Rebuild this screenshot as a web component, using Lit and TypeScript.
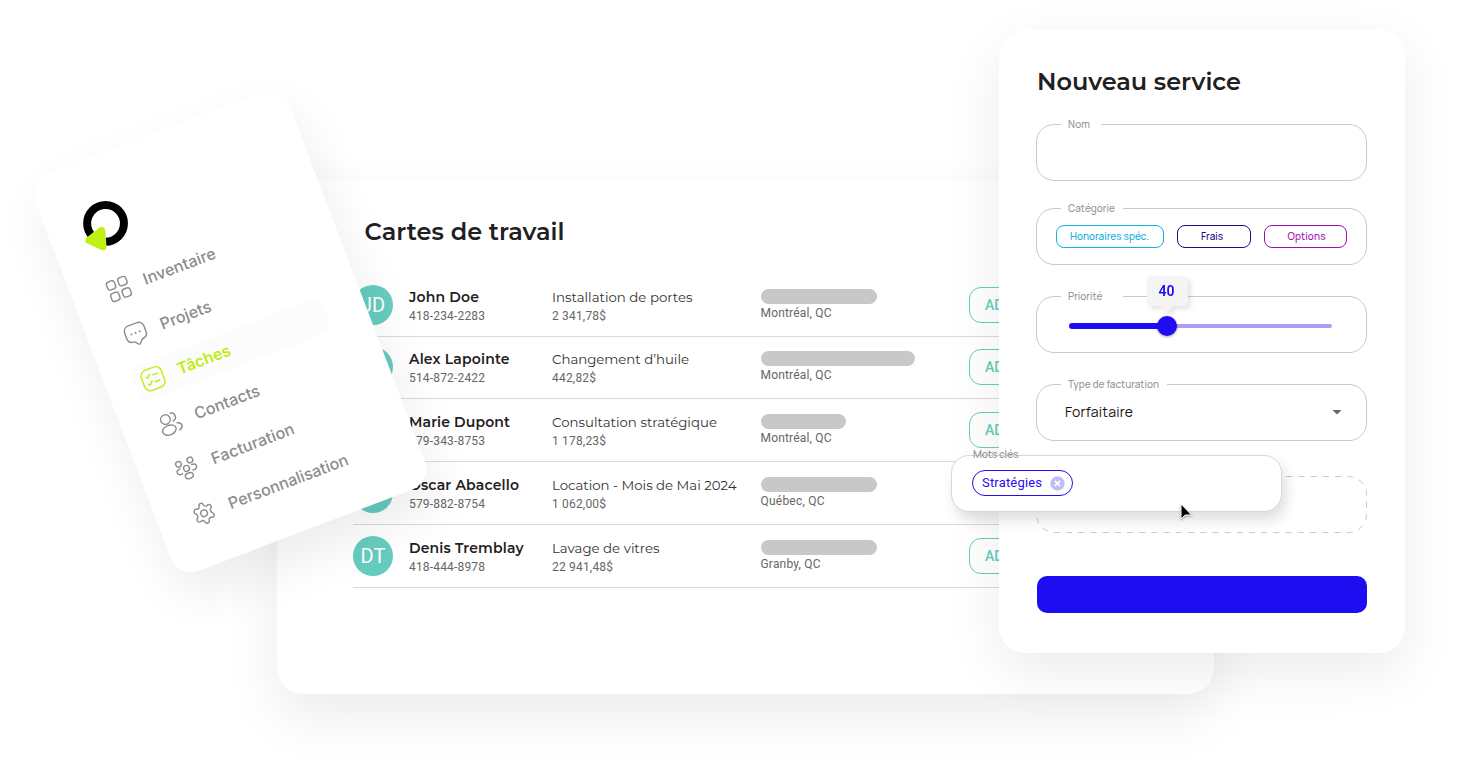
import { LitElement, html, css, svg } from "lit";
import { customElement, property } from "lit/decorators.js";
import { styleMap } from "lit/directives/style-map.js";

/** Single line of text whose tracking is adjusted so that it spans `width` pixels. */
@customElement("tracked-text")
class TrackedText extends LitElement {
  @property({ type: Number }) width = 0;
  @property() text = "";
  static styles = css`
    :host { display: block; white-space: nowrap; }
    .t { display: inline-block; }
  `;
  render() {
    return html`<span class="t">${this.text}</span>`;
  }
  updated() {
    const el = this.renderRoot.querySelector(".t") as HTMLElement;
    el.style.letterSpacing = "0";
    const natural = parseFloat(getComputedStyle(el).width);
    if (this.width && natural) {
      el.style.letterSpacing = (this.width - natural) / (this.text.length - 1) + "px";
    }
  }
}

const tt = (text: string, width: number) =>
  html`<tracked-text .text=${text} .width=${width}></tracked-text>`;

const icons = {
  grid: svg`<rect x="2" y="2" width="8.6" height="8.6" rx="2.8"/><rect x="14.4" y="2" width="8.6" height="8.6" rx="2.8"/><rect x="2" y="14.4" width="8.6" height="8.6" rx="2.8"/><rect x="14.4" y="14.4" width="8.6" height="8.6" rx="2.8"/>`,
  chat: svg`<path d="M8 2.2h9c3.600 0 6 2.400 6 6v5.600c0 3.400-2.200 5.500-5.300 5.800-1 .1-1.400.4-2 1.100l-1.900 2.300c-.8.9-1.800.9-2.600 0l-1.900-2.300c-.6-.7-1-1-2-1.100C4.200 19.300 2 17.200 2 13.800V8.200c0-3.600 2.400-6 6-6z"/><path d="M8 11.500h.01M12.500 11.500h.01M17 11.500h.01" stroke-width="2"/>`,
  tasks: svg`<rect x="1.600" y="1.600" width="21.800" height="21.800" rx="6.200"/><path d="M13.500 8.700h5M13.500 16.200h5M6.300 8.800l1.500 1.400 3-3.300M6.300 16.300l1.500 1.400 3-3.300"/>`,
  users: svg`<circle cx="9.500" cy="7" r="4.900"/><ellipse cx="9.500" cy="18.500" rx="7.200" ry="4.900"/><path d="M16.300 2.600c2.300.3 3.900 2.100 3.900 4.300s-1.600 4-3.900 4.300M19.500 14.300c2.300.5 3.800 1.900 3.800 3.900s-1.500 3.300-3.800 3.900"/>`,
  group: svg`<circle cx="5.800" cy="5.500" r="2.900"/><circle cx="18.200" cy="5.500" r="2.900"/><circle cx="12" cy="12.300" r="3"/><ellipse cx="12" cy="20.200" rx="4.200" ry="2.900"/><path d="M6.400 16.200C3.500 16.500 1.500 15.300 1.500 13.300c0-1.900 1.700-2.900 4.200-2.900M17.600 16.200c2.900.3 4.900-.9 4.900-2.900 0-1.900-1.700-2.900-4.200-2.900"/>`,
  gear: svg`<circle cx="12.500" cy="12.500" r="3.400"/><path d="M10.100 4.200c.2-1.500.9-2.400 2.400-2.400s2.200.9 2.400 2.400c.3 1.700 1.600 2.500 3.200 1.800 1.400-.6 2.500-.4 3.300.9.700 1.300.4 2.300-.8 3.300-1.400 1.100-1.400 3.500 0 4.600 1.200 1 1.500 2 .8 3.300-.8 1.300-1.900 1.500-3.300.9-1.600-.7-2.900.1-3.200 1.800-.2 1.500-.9 2.400-2.400 2.400s-2.200-.9-2.400-2.400c-.3-1.700-1.600-2.500-3.200-1.800-1.400.6-2.500.4-3.300-.9-.7-1.300-.4-2.300.8-3.300 1.400-1.100 1.400-3.500 0-4.600-1.200-1-1.500-2-.8-3.300.8-1.300 1.900-1.500 3.300-.9 1.600.7 2.900-.1 3.200-1.800z"/>`,
};

const menu = [
  { icon: icons.grid, label: "Inventaire", w: 76.5 },
  { icon: icons.chat, label: "Projets", w: 53.5 },
  { icon: icons.tasks, label: "Tâches", w: 56, active: true },
  { icon: icons.users, label: "Contacts", w: 69 },
  { icon: icons.group, label: "Facturation", w: 87.5 },
  { icon: icons.gear, label: "Personnalisation", w: 127 },
];

@customElement("side-menu")
class SideMenu extends LitElement {
  static styles = css`
    :host { display: block; box-sizing: border-box; width: 272px; height: 425px; border-radius: 22px; background: #fff; padding: 40px 40px 0 29px; font: 450 16px/20px Inter, sans-serif; color: #8c8c8c; box-shadow: 0 24px 50px rgba(0, 0, 0, 0.075); }
    .logo { display: block; width: 60px; height: 60px; margin-left: -2px; transform: rotate(20.8deg); overflow: visible; }
    .items { display: flex; flex-direction: column; gap: 12px; padding-top: 15.700px; }
    .item { display: flex; align-items: center; height: 36px; border-radius: 10px; padding-left: 6.200px; gap: 13.900px; }
    .item svg { width: 24.500px; height: 24.500px; fill: none; stroke: currentColor; stroke-width: 1.450; stroke-linecap: round; stroke-linejoin: round; }
    .item tracked-text { padding-bottom: 1px; }
    .active { background: #fcfcfc; color: #bdee12; font-weight: 600; }
  `;
  render() {
    return html`
      <svg class="logo" viewBox="0 0 60 60">
        <circle cx="30" cy="27" r="18.400" fill="none" stroke="#000" stroke-width="8" />
        <path d="M26.200 34 L27.500 50.500 L13.300 44Z" fill="#c1f015" stroke="#c1f015" stroke-width="7" stroke-linejoin="round" />
      </svg>
      <div class="items">
        ${menu.map(m => html`<div class="item ${m.active ? "active" : ""}">
          <svg viewBox="0 0 25 25">${m.icon}</svg>${tt(m.label, m.w)}
        </div>`)}
      </div>`;
  }
}

const rows = [
  { i: "JD", n: "John Doe", nw: 70, p: "418-234-2283", d: "Installation de portes", dw: 140.5, a: "2 341,78$", aw: 54, b: 116, c: "Montréal, QC", cw: 71, open: true },
  { i: "AL", n: "Alex Lapointe", nw: 100.5, p: "514-872-2422", d: "Changement d’huile", dw: 137, a: "442,82$", aw: 44, b: 154, c: "Montréal, QC", cw: 71, open: true },
  { i: "MD", n: "Marie Dupont", nw: 101, p: "579-343-8753", d: "Consultation stratégique", dw: 165, a: "1 178,23$", aw: 54, b: 85, c: "Montréal, QC", cw: 71, open: true },
  { i: "OA", n: "Oscar Abacello", nw: 110, p: "579-882-8754", d: "Location - Mois de Mai 2024", dw: 184.5, a: "1 062,00$", aw: 54, b: 116, c: "Québec, QC", cw: 64, open: false },
  { i: "DT", n: "Denis Tremblay", nw: 114.5, p: "418-444-8978", d: "Lavage de vitres", dw: 107.5, a: "22 941,48$", aw: 61, b: 116, c: "Granby, QC", cw: 60, open: true },
];

@customElement("work-cards")
class WorkCards extends LitElement {
  static styles = css`
    :host { display: block; box-sizing: border-box; width: 937px; height: 513px; border-radius: 26px; background: #fff; padding: 35px 76px 0; box-shadow: 0 22px 55px rgba(0, 0, 0, 0.08); font-family: Roboto, sans-serif; color: #1f2022; }
    h1 { margin: 0 0 26px 11.500px; font: 600 24px/32px Montserrat, Inter, sans-serif; }
    .row { display: grid; grid-template-columns: 56px 143px 208.500px 208.500px auto; box-sizing: border-box; height: 63px; padding-top: 11px; border-bottom: 1px solid #dadada; }
    .row.tight { height: 62px; padding-top: 10px; }
    .avatar { width: 40px; height: 40px; border-radius: 50%; background: #67ccc0; color: #fff; font-size: 20px; line-height: 40px; text-align: center; }
    .name, .desc { padding-top: 3px; line-height: 18px; font-family: Montserrat, Inter, sans-serif; font-size: 14px; font-weight: 600; }
    .desc { font-weight: 400; font-size: 13.300px; color: #333; }
    .sub { font-size: 12px; line-height: 18px; color: #666; padding-top: 1px; }
    .bar { height: 15px; border-radius: 8px; background: #c8c8c8; margin-top: 4px; }
    .bar + .sub { padding-top: 0; }
    .action { box-sizing: border-box; width: 120px; height: 36px; margin-top: 2px; border: 1px solid #67ccc0; border-radius: 12px; padding-left: 15px; font-weight: 500; font-size: 14px; line-height: 35px; color: #67ccc0; }
  `;
  render() {
    return html`
      <h1>${tt("Cartes de travail", 200)}</h1>
      ${rows.map((r, k) => html`<div class="row ${k === 1 ? "tight" : ""}">
        <div class="avatar">${r.i}</div>
        <div><div class="name">${tt(r.n, r.nw)}</div><div class="sub">${tt(r.p, 76)}</div></div>
        <div><div class="desc">${tt(r.d, r.dw)}</div><div class="sub">${tt(r.a, r.aw)}</div></div>
        <div><div class="bar" style=${styleMap({ width: r.b + "px" })}></div><div class="sub">${tt(r.c, r.cw)}</div></div>
        ${r.open ? html`<div class="action">AD</div>` : ""}
      </div>`)}`;
  }
}

@customElement("service-form")
class ServiceForm extends LitElement {
  static styles = css`
    :host { display: block; box-sizing: border-box; width: 406px; height: 623px; border-radius: 26px; background: #fff; padding: 36px 37px 0; box-shadow: 0 18px 55px rgba(0, 0, 0, 0.08); font-family: Manrope, Inter, sans-serif; color: #1f2022; }
    h1 { margin: 0 0 20px 1px; font: 600 24px/32px Montserrat, Inter, sans-serif; height: 32px; }
    fieldset { box-sizing: border-box; width: 331px; height: 63px; margin: 0 0 25px; padding: 0; min-width: 0; border: 1px solid #c9c9c9; border-radius: 18px; }
    fieldset.first { margin-bottom: 21px; }
    legend { margin-left: 24px; padding: 0 7px; height: 12px; font-size: 10px; font-weight: 500; line-height: 13px; color: #959595; box-sizing: border-box; }
    .chips { display: flex; gap: 13px; padding: 11px 0 0 19px; font-size: 10px; font-weight: 500; }
    .chip { display: flex; justify-content: center; align-items: center; box-sizing: border-box; height: 23px; border: 1px solid; border-radius: 8px; padding-bottom: 1px; }
    .cyan { width: 108px; color: #0fb1dd; padding-right: 1px; }
    .navy { width: 74px; color: #1d0a85; padding-right: 4px; }
    .purple { width: 83px; color: #a20db0; padding-left: 2px; }
    .slider { position: relative; display: flex; align-items: center; margin: 14px 0 0 32px; height: 20px; width: 263px; }
    .done { width: 98px; height: 6px; border-radius: 3px; background: #1f0df2; }
    .rest { flex: 1; height: 4px; border-radius: 2px; background: #a79ef8; }
    .knob { position: absolute; left: 88px; top: 0; width: 20px; height: 20px; border-radius: 50%; background: #1f0df2; box-shadow: 0 1px 3px rgba(0, 0, 0, 0.35); }
    .tip { position: absolute; left: 78px; top: -40px; width: 41px; height: 36px; filter: drop-shadow(3px 3px 2px rgba(0, 0, 0, 0.1)); }
    .bubble { display: flex; justify-content: center; box-sizing: border-box; height: 30px; padding-right: 2px; border-radius: 4px; background: #f4f4f4; color: #1f0df2; font: 600 14px/30px Roboto, sans-serif; }
    .tail { width: 12px; height: 6px; margin-left: 14px; background: #f4f4f4; clip-path: polygon(0 0, 100% 0, 50% 100%); }
    .select { display: flex; justify-content: space-between; align-items: center; padding: 11px 24px 0 28px; height: 20px; font-size: 14px; font-weight: 450; color: #151515; }
    .caret { width: 10px; height: 5px; margin-top: 2px; background: #666; clip-path: polygon(0 0, 100% 0, 50% 100%); }
    .drop { display: block; margin-top: 35px; }
    .submit { display: block; border: 0; margin: 43px 0 0 1px; width: 330px; height: 37px; border-radius: 10px; background: #1f0df2; }
  `;
  field(label: string, w: number, gap: number, body: unknown, cls = "") {
    return html`<fieldset class=${cls}><legend style=${styleMap({ width: gap + "px" })}>${tt(label, w)}</legend>${body}</fieldset>`;
  }
  render() {
    return html`
      <h1>${tt("Nouveau service", 204)}</h1>
      ${this.field("Nom", 22, 40, "", "first")}
      ${this.field("Catégorie", 47, 62, html`<div class="chips">
        <div class="chip cyan">${tt("Honoraires spéc.", 79)}</div>
        <div class="chip navy">${tt("Frais", 22)}</div>
        <div class="chip purple">${tt("Options", 38)}</div>
      </div>`)}
      ${this.field("Priorité", 34.5, 62, html`<div class="slider">
        <div class="done"></div><div class="rest"></div><div class="knob"></div>
        <div class="tip"><div class="bubble">${tt("40", 16)}</div><div class="tail"></div></div>
      </div>`)}
      ${this.field("Type de facturation", 91, 106, html`<div class="select">
        ${tt("Forfaitaire", 68)}<div class="caret"></div>
      </div>`)}
      <svg class="drop" width="331" height="57" fill="none" stroke="#c9c9c9"><rect x=".5" y=".5" width="330" height="56" rx="18" stroke-dasharray="6.100 6.100" /></svg>
      <button class="submit"></button>`;
  }
}

@customElement("keyword-box")
class KeywordBox extends LitElement {
  static styles = css`
    :host { display: block; box-sizing: border-box; width: 331px; height: 57px; border: 1px solid #d8d8d8; border-radius: 18px; background: #fff; box-shadow: 4px 8px 14px rgba(0, 0, 0, 0.13); padding-left: 20px; }
    .label { margin: -8px 0 9px 1px; font: 500 10.500px/13px Manrope, Inter, sans-serif; color: #909090; }
    .tag { display: flex; align-items: center; box-sizing: border-box; width: 101px; height: 26px; border: 1px solid #1f0df2; border-radius: 13px; padding-left: 9px; gap: 8px; font: 400 13px/20px Roboto, sans-serif; color: #1f0df2; }
    .tag svg { width: 15px; height: 15px; }
  `;
  render() {
    return html`
      <div class="label">${tt("Mots clés", 45.5)}</div>
      <div class="tag">${tt("Stratégies", 60)}
        <svg viewBox="0 0 15 15"><circle cx="7.500" cy="7.500" r="7.200" fill="#c2bbfb" /><path d="M4.800 4.800l5.400 5.400M10.200 4.800l-5.400 5.400" stroke="#fff" stroke-width="1.700" /></svg>
      </div>`;
  }
}

@customElement("app-root")
class AppRoot extends LitElement {
  static styles = css`
    :host { display: block; position: relative; width: 1459px; height: 772px; overflow: hidden; background: #fff; }
    .win { position: absolute; }
    .cards { left: 277px; top: 181px; }
    .menu { left: 93.500px; top: 119.300px; transform: rotate(-20.800deg); }
    .form { left: 999px; top: 30px; }
    .keys { left: 951px; top: 455px; }
    .cursor { left: 1178px; top: 501px; width: 18px; height: 22px; filter: drop-shadow(0 1px 1px rgba(0, 0, 0, 0.35)); }
  `;
  render() {
    return html`
      <work-cards class="win cards"></work-cards>
      <side-menu class="win menu"></side-menu>
      <service-form class="win form"></service-form>
      <keyword-box class="win keys"></keyword-box>
      <svg class="win cursor" viewBox="0 0 18 22"><path d="M3 3v15l4.200-4h6.300z" fill="#000" stroke="#fff" stroke-width="1" /></svg>`;
  }
}
